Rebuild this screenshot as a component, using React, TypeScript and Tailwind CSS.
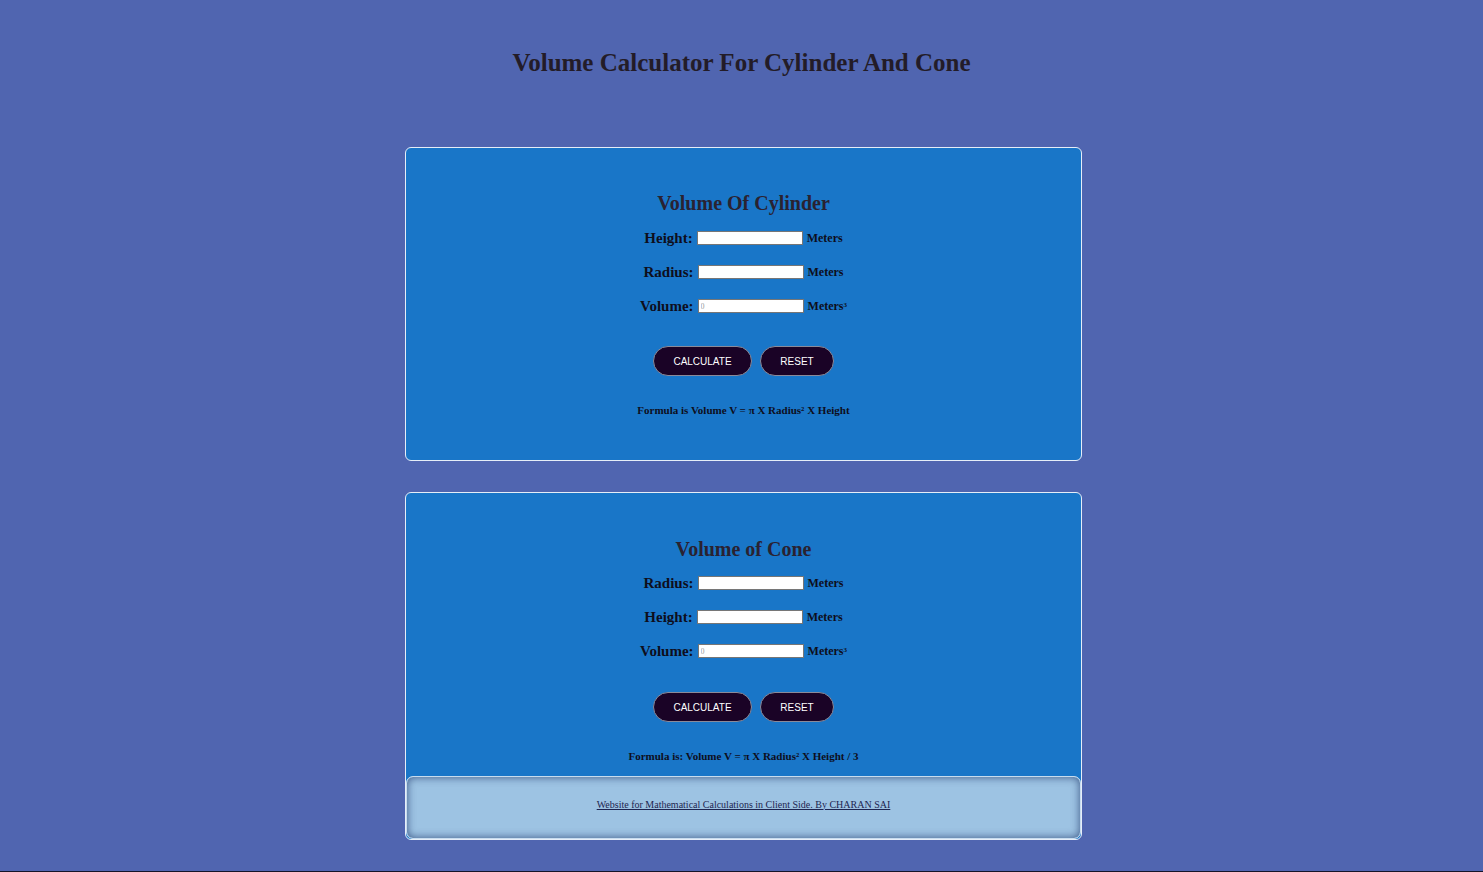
const serif = { fontFamily: '"Liberation Serif", "Times New Roman", serif' };

function Row({ label, unit, value }: { label: string; unit: React.ReactNode; value?: string }) {
  return (
    <div className="h-[34px] flex items-center justify-center">
      <label className="text-[15px] font-bold text-[#0e0e1c] mr-[4px]">{label}</label>
      <input
        type="text"
        readOnly={value !== undefined}
        placeholder={value}
        className="w-[106px] h-[14px] bg-white border border-[#767676] text-[8px] px-[2px] placeholder:text-[#999] outline-none"
      />
      <span className="text-[12px] font-bold text-[#0e0e1c] ml-[4px]">{unit}</span>
    </div>
  );
}

function Buttons() {
  const btn =
    "h-[30px] rounded-full bg-[#1a0326] border border-[#8a8a9a] text-white text-[10px] uppercase";
  return (
    <div className="flex justify-center gap-[8px]" style={{ fontFamily: '"Liberation Sans", Arial, sans-serif' }}>
      <button className={`${btn} w-[99px]`}>Calculate</button>
      <button className={`${btn} w-[74px]`}>Reset</button>
    </div>
  );
}

const cubed = (
  <>
    Meters<sup className="text-[7px]">3</sup>
  </>
);

export default function App() {
  return (
    <div className="w-full h-[872px] bg-[#5065b0] border-b border-[#15152a] overflow-hidden" style={serif}>
      {/* PAGE TITLE */}
      <h1 className="pt-[47px] text-center text-[25px] leading-[32px] font-bold text-[#231c28]">
        Volume Calculator For Cylinder And Cone
      </h1>

      <div className="flex flex-col items-center pl-[4px] mt-[68px]">
        {/* CYLINDER */}
        <div className="w-[677px] bg-[#1976c8] border border-[#e6eef8] rounded-[6px] pt-[44px] pb-[43px]">
          <h2 className="text-center text-[20px] leading-[22px] font-bold text-[#2a2231] mb-[7px]">
            Volume Of Cylinder
          </h2>
          <Row label="Height:" unit="Meters" />
          <Row label="Radius:" unit="Meters" />
          <Row label="Volume:" unit={cubed} value="0" />
          <div className="mt-[23px]">
            <Buttons />
          </div>
          <p className="mt-[27px] text-center text-[11px] leading-[14px] font-bold text-[#0e0e1c]">
            Formula is Volume V = π X Radius² X Height
          </p>
        </div>

        {/* CONE */}
        <div className="w-[677px] mt-[31px] bg-[#1976c8] border border-[#e6eef8] rounded-[6px] pt-[45px] overflow-hidden">
          <h2 className="text-center text-[20px] leading-[22px] font-bold text-[#2a2231] mb-[6px]">
            Volume of Cone
          </h2>
          <Row label="Radius:" unit="Meters" />
          <Row label="Height:" unit="Meters" />
          <Row label="Volume:" unit={cubed} value="0" />
          <div className="mt-[24px]">
            <Buttons />
          </div>
          <p className="mt-[27px] text-center text-[11px] leading-[14px] font-bold text-[#0e0e1c]">
            Formula is: Volume V = π X Radius² X Height / 3
          </p>

          {/* FOOTER */}
          <div className="mt-[13px] h-[63px] pb-[7px] bg-[#9dc3e3] border border-[#c7dcef] rounded-[7px] shadow-[inset_0_0_9px_rgba(25,50,100,0.75)] flex items-center justify-center">
            <a href="#" className="text-[10px] text-[#1d2550] underline">
              Website for Mathematical Calculations in Client Side. By CHARAN SAI
            </a>
          </div>
        </div>
      </div>
    </div>
  );
}
